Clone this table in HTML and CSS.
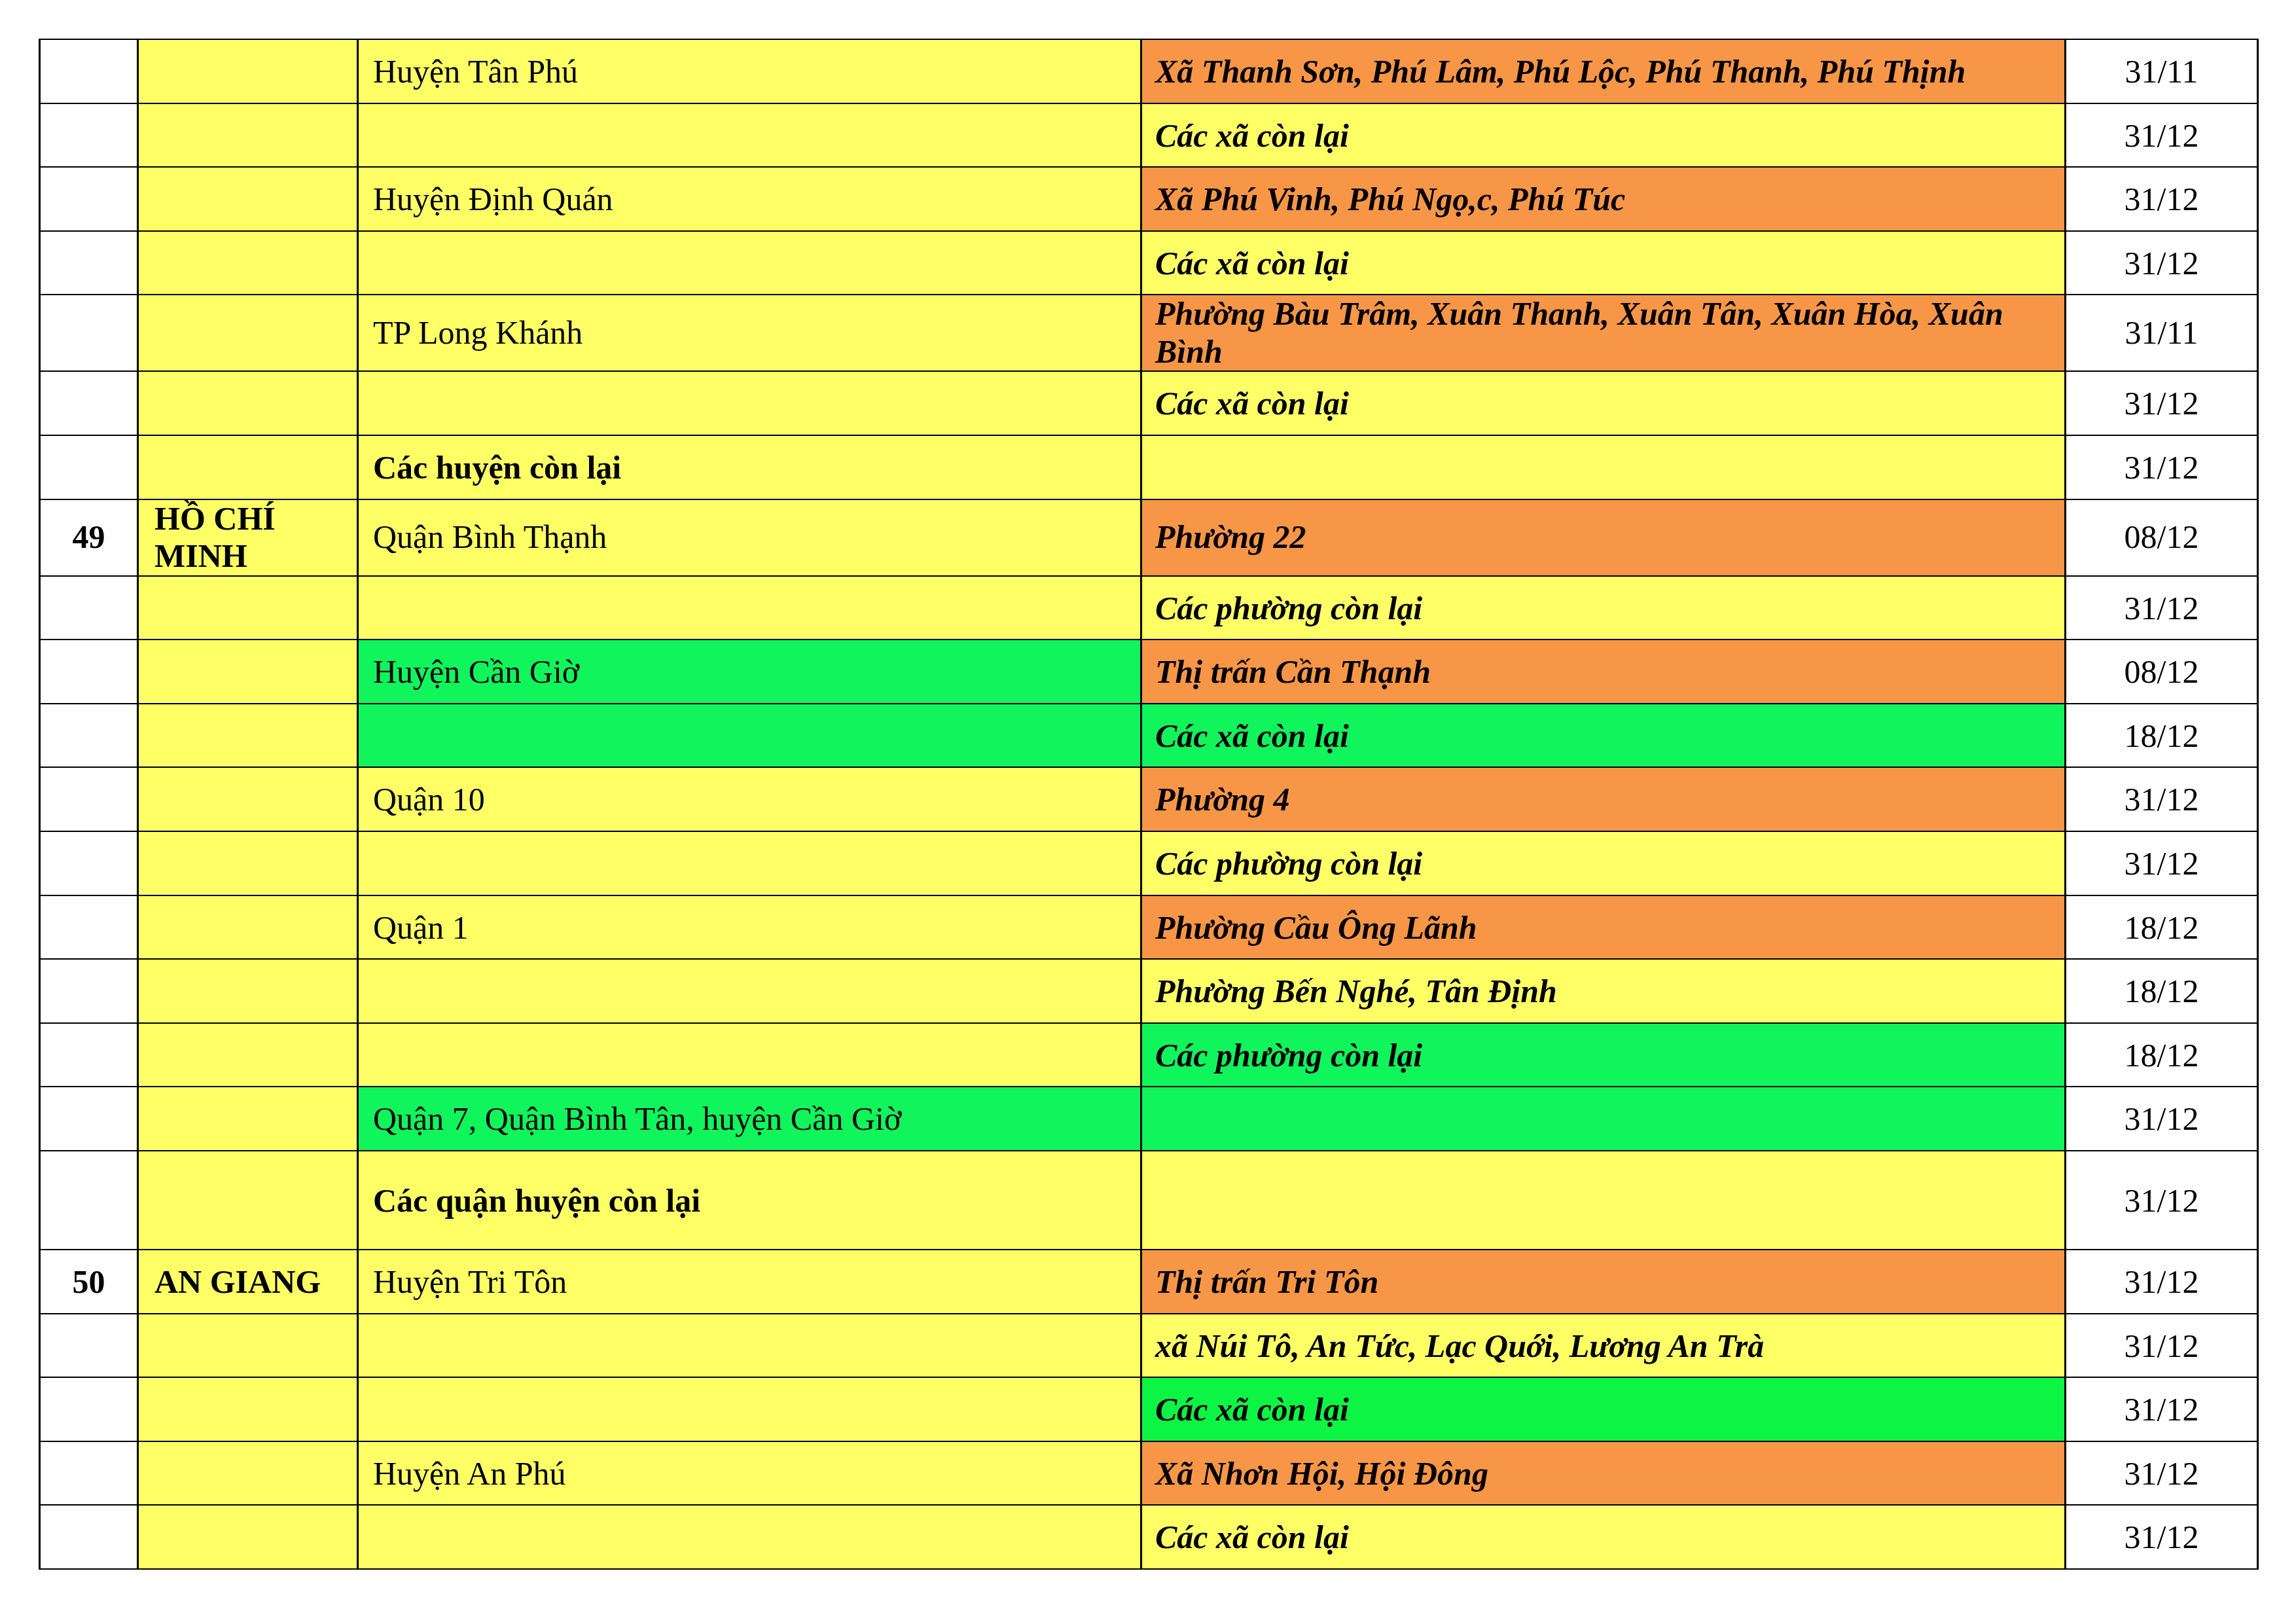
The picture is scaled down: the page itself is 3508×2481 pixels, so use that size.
FILE: index.html
```html
<!DOCTYPE html>
<html lang="vi">
<head>
<meta charset="utf-8">
<title>Bảng</title>
<link rel="stylesheet" href="styles.css">
</head>
<body>
<table class="sheet">
  <colgroup>
    <col class="c-stt"><col class="c-prov"><col class="c-dist"><col class="c-ward"><col class="c-date">
  </colgroup>
  <tbody>
    <tr><td class="stt"></td><td class="prov y"></td><td class="dist y">Huyện Tân Phú</td><td class="ward o">Xã Thanh Sơn, Phú Lâm, Phú Lộc, Phú Thanh, Phú Thịnh</td><td class="date">31/11</td></tr>
    <tr><td class="stt"></td><td class="prov y"></td><td class="dist y"></td><td class="ward y">Các xã còn lại</td><td class="date">31/12</td></tr>
    <tr><td class="stt"></td><td class="prov y"></td><td class="dist y">Huyện Định Quán</td><td class="ward o">Xã Phú Vinh, Phú Ngọ,c, Phú Túc</td><td class="date">31/12</td></tr>
    <tr><td class="stt"></td><td class="prov y"></td><td class="dist y"></td><td class="ward y">Các xã còn lại</td><td class="date">31/12</td></tr>
    <tr class="auto"><td class="stt"></td><td class="prov y"></td><td class="dist y">TP Long Khánh</td><td class="ward o">Phường Bàu Trâm, Xuân Thanh, Xuân Tân, Xuân Hòa, Xuân Bình</td><td class="date">31/11</td></tr>
    <tr><td class="stt"></td><td class="prov y"></td><td class="dist y"></td><td class="ward y">Các xã còn lại</td><td class="date">31/12</td></tr>
    <tr><td class="stt"></td><td class="prov y"></td><td class="dist y strong">Các huyện còn lại</td><td class="ward y"></td><td class="date">31/12</td></tr>
    <tr class="auto"><td class="stt">49</td><td class="prov y">HỒ CHÍ MINH</td><td class="dist y">Quận Bình Thạnh</td><td class="ward o">Phường 22</td><td class="date">08/12</td></tr>
    <tr><td class="stt"></td><td class="prov y"></td><td class="dist y"></td><td class="ward y">Các phường còn lại</td><td class="date">31/12</td></tr>
    <tr><td class="stt"></td><td class="prov y"></td><td class="dist g">Huyện Cần Giờ</td><td class="ward o">Thị trấn Cần Thạnh</td><td class="date">08/12</td></tr>
    <tr><td class="stt"></td><td class="prov y"></td><td class="dist g"></td><td class="ward g">Các xã còn lại</td><td class="date">18/12</td></tr>
    <tr><td class="stt"></td><td class="prov y"></td><td class="dist y">Quận 10</td><td class="ward o">Phường 4</td><td class="date">31/12</td></tr>
    <tr><td class="stt"></td><td class="prov y"></td><td class="dist y"></td><td class="ward y">Các phường còn lại</td><td class="date">31/12</td></tr>
    <tr><td class="stt"></td><td class="prov y"></td><td class="dist y">Quận 1</td><td class="ward o">Phường Cầu Ông Lãnh</td><td class="date">18/12</td></tr>
    <tr><td class="stt"></td><td class="prov y"></td><td class="dist y"></td><td class="ward y">Phường Bến Nghé, Tân Định</td><td class="date">18/12</td></tr>
    <tr><td class="stt"></td><td class="prov y"></td><td class="dist y"></td><td class="ward g">Các phường còn lại</td><td class="date">18/12</td></tr>
    <tr><td class="stt"></td><td class="prov y"></td><td class="dist g">Quận 7, Quận Bình Tân, huyện Cần Giờ</td><td class="ward g"></td><td class="date">31/12</td></tr>
    <tr class="tall"><td class="stt"></td><td class="prov y"></td><td class="dist y strong">Các quận huyện còn lại</td><td class="ward y"></td><td class="date">31/12</td></tr>
    <tr><td class="stt">50</td><td class="prov y">AN GIANG</td><td class="dist y">Huyện Tri Tôn</td><td class="ward o">Thị trấn Tri Tôn</td><td class="date">31/12</td></tr>
    <tr><td class="stt"></td><td class="prov y"></td><td class="dist y"></td><td class="ward y">xã Núi Tô, An Tức, Lạc Quới, Lương An Trà</td><td class="date">31/12</td></tr>
    <tr><td class="stt"></td><td class="prov y"></td><td class="dist y"></td><td class="ward g2">Các xã còn lại</td><td class="date">31/12</td></tr>
    <tr><td class="stt"></td><td class="prov y"></td><td class="dist y">Huyện An Phú</td><td class="ward o">Xã Nhơn Hội, Hội Đông</td><td class="date">31/12</td></tr>
    <tr><td class="stt"></td><td class="prov y"></td><td class="dist y"></td><td class="ward y">Các xã còn lại</td><td class="date">31/12</td></tr>
  </tbody>
</table>
</body>
</html>
```
FILE: styles.css
```css
html, body {
  margin: 0;
  padding: 0;
  background: #ffffff;
}

body {
  padding: 59px 0 0 59px;
  font-family: "Liberation Serif", "Times New Roman", serif;
  font-size: 50px;
  line-height: 1.15;
  color: #000000;
}

.sheet {
  border-collapse: collapse;
  table-layout: fixed;
  width: 3389px;
}

.c-stt { width: 150px; }
.c-prov { width: 336px; }
.c-dist { width: 1197px; }
.c-ward { width: 1412px; }
.c-date { width: 294px; }

.sheet td {
  border-top: 2px solid #000;
  border-bottom: 2px solid #000;
  border-left: 3px solid #000;
  border-right: 3px solid #000;
  padding: 2px 20px 0 22px;
  vertical-align: middle;
  background: #ffffff;
}

.sheet tr { height: 97.6px; }
.sheet tr.tall { height: 151px; }

.stt {
  text-align: center;
  font-weight: bold;
  padding: 2px 0 0 0 !important;
}

.prov {
  font-weight: bold;
  padding-left: 24px !important;
}

.dist.strong { font-weight: bold; }

.ward {
  font-weight: bold;
  font-style: italic;
  padding-left: 20px !important;
}

.date {
  text-align: center;
  padding: 2px 0 0 0 !important;
}

.sheet tr.auto td { padding-top: 0 !important; }

.sheet td.y { background: #ffff66; }
.sheet td.o { background: #f79646; }
.sheet td.g { background: #10f45c; }
.sheet td.g2 { background: #0cf545; }
```
